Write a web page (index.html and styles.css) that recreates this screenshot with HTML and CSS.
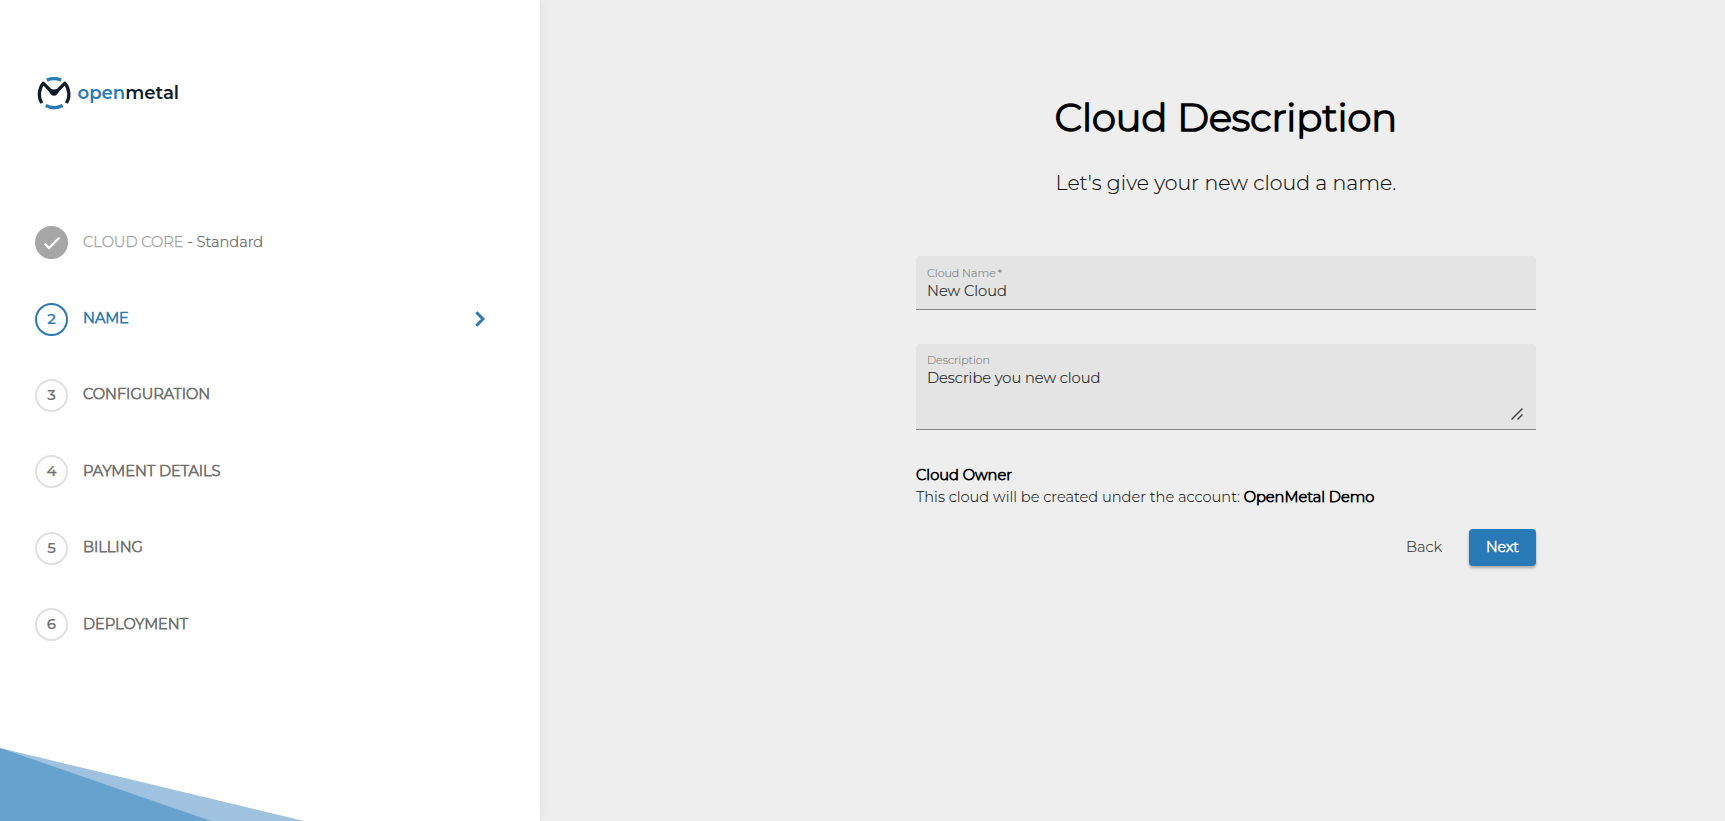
FILE: index.html
```
<!DOCTYPE html>
<html lang="en">
<head>
<meta charset="utf-8">
<title>OpenMetal - Cloud Description</title>
<link rel="stylesheet" href="styles.css">
</head>
<body>
<div class="app">
  <aside class="sidebar">
    <div class="logo">
      <svg class="logo-mark" viewBox="0 0 34 34" fill="none">
        <path d="M9.800 4Q17 1.300 24.200 4" stroke="#2a7ab5" stroke-width="3.200"/>
        <path d="M8.800 29.500Q17 34 25.600 29.500" stroke="#2a7ab5" stroke-width="3.400"/>
        <path d="M4.800 27C1 21 1.600 13 6.200 7.200L12.500 13.500Q17 17.500 21.700 13.500L28 7.200C32.600 13 33.200 21 29.400 27" stroke="#101c2a" stroke-width="3.200" stroke-linejoin="round"/>
        <path d="M8.500 10.500Q17 17 25.500 10.500L20 18.500Q17 21 14 18.500Z" fill="#101c2a"/>
      </svg>
      <span class="logo-text"><span class="logo-open">open</span>metal</span>
    </div>
    <ol class="steps">
      <li class="step done"><span class="dot"><svg class="check" viewBox="0 0 18 14"><path d="M1.500 7.500L6 12L16.500 1.500" fill="none" stroke="#fff" stroke-width="2.300"/></svg></span><span class="label">CLOUD CORE <span class="choice">- Standard</span></span></li>
      <li class="step active"><span class="dot">2</span><span class="label">NAME</span><svg class="chevron" viewBox="0 0 10 16"><path d="M1.300 1.300L8 8L1.300 14.700" fill="none" stroke="#2a7ab5" stroke-width="3"/></svg></li>
      <li class="step"><span class="dot">3</span><span class="label">CONFIGURATION</span></li>
      <li class="step"><span class="dot">4</span><span class="label">PAYMENT DETAILS</span></li>
      <li class="step"><span class="dot">5</span><span class="label">BILLING</span></li>
      <li class="step"><span class="dot">6</span><span class="label">DEPLOYMENT</span></li>
    </ol>
    <svg class="wedge" viewBox="0 0 304 73"><path d="M0 0L304 73H0Z" fill="#9ec2df"/><path d="M0 0L211 73H0Z" fill="#67a1cd"/></svg>
  </aside>
  <main class="main">
    <div class="form">
      <h1 class="title">Cloud Description</h1>
      <p class="subtitle">Let's give your new cloud a name.</p>
      <div class="field"><span class="field-label">Cloud Name<span class="required">*</span></span><span class="field-value">New Cloud</span></div>
      <div class="field area"><span class="field-label">Description</span><span class="field-value">Describe you new cloud</span>
        <svg class="grip" viewBox="0 0 12 12"><path d="M.5 11.500L11.500 .5M6.500 11.500L11.500 6.500" stroke="#444" stroke-width="1.500"/></svg>
      </div>
      <h2 class="owner">Cloud Owner</h2>
      <p class="account">This cloud will be created under the account: <b>OpenMetal Demo</b></p>
      <div class="actions"><span class="back">Back</span><span class="next">Next</span></div>
    </div>
  </main>
</div>
</body>
</html>
```
FILE: styles.css
```
* { box-sizing: border-box; }
body { margin: 0; background: #eee; font-family: Montserrat, Inter, sans-serif; font-size: 14.65px; font-weight: 300; color: #111; }
.app { display: flex; width: 100%; height: 821px; overflow: hidden; }
.sidebar { width: 540px; flex: none; background: #fff; box-shadow: 0 0 12px rgba(0,0,0,.07); display: flex; flex-direction: column; padding: 76px 0 0 35px; }
.logo { display: flex; align-items: center; gap: 6.5px; height: 34px; margin-left: 2px; }
.logo-mark { width: 34px; height: 34px; }
.logo-text { font-size: 18.1px; font-weight: 600; color: #101c2a; line-height: 24px; padding-bottom: 1px; }
.logo-open { color: #2a7ab5; }
.steps { list-style: none; margin: 94.5px 0 0; padding: 0; flex: 1; }
.step { height: 76.4px; display: flex; align-items: center; color: #707070; }
.dot { width: 33px; height: 33px; border: 2px solid #e0e0e0; border-radius: 50%; display: flex; align-items: center; justify-content: center; margin-right: 15px; padding-bottom: 2px; font-size: 15px; font-weight: 500; -webkit-text-stroke: .2px; flex: none; }
.label { line-height: 20px; padding-bottom: 2px; font-size: 14.6px; -webkit-text-stroke: .75px; }
.done .dot { background: #a6a6a6; border-color: #a6a6a6; padding-bottom: 0; }
.done .label { color: #999; -webkit-text-stroke: .25px; }
.check { width: 18px; height: 14px; flex: none; }
.choice { color: #666; }
.active { color: #2a7ab5; }
.active .dot { border-color: #2a7ab5; }
.chevron { width: 10px; height: 16px; margin-left: auto; margin-right: 55px; }
.wedge { width: 304px; height: 73px; margin-left: -35px; flex: none; display: block; }
.main { flex: 1; padding: 92px 0 0 376px; }
.form { width: 620px; }
.title { margin: 0; text-align: center; font-size: 38.4px; line-height: 52px; font-weight: 300; color: #000; -webkit-text-stroke: 1.7px; }
.subtitle { margin: 25px 0 0; text-align: center; font-size: 20.5px; line-height: 28px; -webkit-text-stroke: .15px; }
.field { margin-top: 59px; height: 54px; background: #e4e4e4; border-bottom: 1px solid #858585; border-radius: 4px 4px 0 0; padding: 9px 11px 0; display: flex; flex-direction: column; position: relative; }
.field-label { font-size: 11px; line-height: 16px; color: #777; -webkit-text-stroke: .1px; }
.required { margin-left: 2px; }
.field-value { line-height: 20px; color: #222; -webkit-text-stroke: .2px; }
.area { margin-top: 34px; height: 86px; padding-top: 8px; }
.grip { position: absolute; right: 13px; bottom: 9px; width: 12px; height: 12px; }
.owner { margin: 33.5px 0 0; font-size: 14.65px; line-height: 22.5px; font-weight: 300; color: #000; -webkit-text-stroke: .75px; }
.account { margin: 0; line-height: 22.5px; -webkit-text-stroke: .1px; }
.account b { font-weight: 300; color: #000; -webkit-text-stroke: .75px; }
.actions { margin-top: 20.5px; display: flex; justify-content: flex-end; align-items: center; gap: 27px; }
.back { color: #333; padding-bottom: 2px; -webkit-text-stroke: .15px; }
.next { width: 67px; height: 37px; padding-bottom: 2px; background: #287ab6; color: #fff; border-radius: 4px; box-shadow: 0 2px 3px rgba(0,0,0,.3); display: flex; align-items: center; justify-content: center; -webkit-text-stroke: .6px; font-size: 14.3px; }
```
